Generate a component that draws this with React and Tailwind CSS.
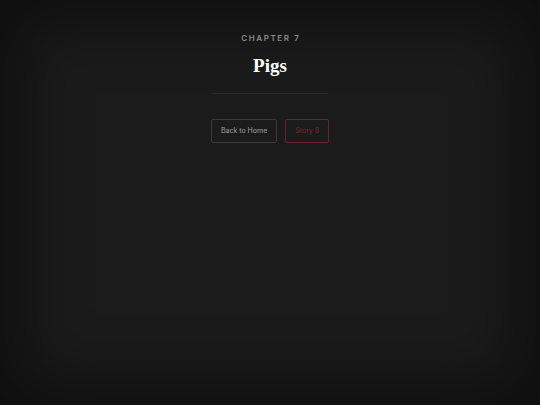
import React from 'react';

const App = () => {
    return (
        <div className="w-[540px] h-[405px] bg-[#1b1b1b] shadow-[inset_0_0_60px_24px_rgba(0,0,0,0.45)] overflow-hidden">
            <div className="flex flex-col items-center pt-[34px]">
                {/* Chapter label */}
                <span className="text-[8px] font-semibold tracking-[0.2em] text-[#8a8a8a] font-['Inter',sans-serif] leading-none mr-[-0.2em]">
                    CHAPTER 7
                </span>
                <h1 className="mt-[14px] text-[19px] font-bold text-white font-['Liberation_Serif',serif] leading-none">
                    Pigs
                </h1>
                <div className="mt-[18px] w-[116px] h-px bg-[#2a2a2a]" />

                {/* Navigation */}
                <div className="mt-[25px] flex gap-2 font-['Inter',sans-serif]">
                    <button className="h-6 px-[9px] border border-[#3a3a3a] rounded-[2px] text-[7px] text-[#a0a0a0]">
                        Back to Home
                    </button>
                    <button className="h-6 px-[9px] border border-[#6b2424] rounded-[2px] text-[7px] text-[#7d2828]">
                        Story 8
                    </button>
                </div>
            </div>
        </div>
    );
};

export default App;
